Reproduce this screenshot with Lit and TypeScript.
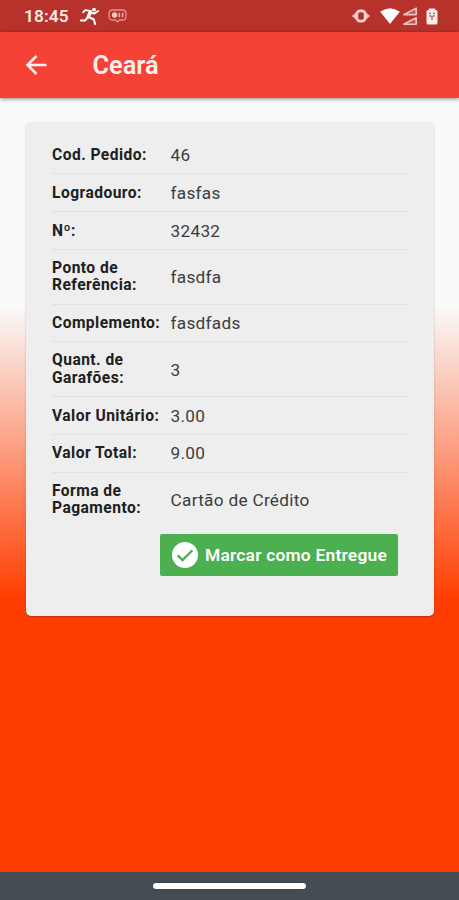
import { LitElement, html, css, svg } from "lit";
import { customElement } from "lit/decorators.js";

interface Field {
  label: string[];
  value: string;
}

const FIELDS: Field[] = [
  { label: ["Cod. Pedido:"], value: "46" },
  { label: ["Logradouro:"], value: "fasfas" },
  { label: ["Nº:"], value: "32432" },
  { label: ["Ponto de", "Referência:"], value: "fasdfa" },
  { label: ["Complemento:"], value: "fasdfads" },
  { label: ["Quant. de", "Garafões:"], value: "3" },
  { label: ["Valor Unitário:"], value: "3.00" },
  { label: ["Valor Total:"], value: "9.00" },
  { label: ["Forma de", "Pagamento:"], value: "Cartão de Crédito" },
];

const signal = (y: number) => svg`
  <path d="M1.8 ${y + 6.4} L14.2 ${y} V${y + 6.4} Z" fill="#c2544c" stroke="#f3c3bf" stroke-width="1.6" stroke-linejoin="round"/>`;

@customElement("status-bar")
class StatusBar extends LitElement {
  static styles = css`
    :host { display: flex; align-items: center; height: 32px; padding: 0 21px 0 24px; background: #b6322a; box-sizing: border-box; }
    .time { font: 600 17.3px/32px Roboto, sans-serif; letter-spacing: 0.1px; color: #fde9e7; width: 54.5px; white-space: nowrap; }
    svg { display: block; flex: none; }
    .chat { margin-left: 8px; }
    .gap { flex: 1; }
    .wifi { margin-left: 9px; }
    .cell { margin-left: 2px; }
    .battery { margin-left: 7px; }
  `;
  render() {
    return html`
      <span class="time">18:45</span>
      <svg width="21" height="20" viewBox="0 0 21 20" fill="none" stroke="#fff" stroke-linecap="round" stroke-linejoin="round">
        <circle cx="15" cy="3.6" r="1.9" fill="#fff" stroke="none"/>
        <path d="M11.4 6 L9.4 10.6" stroke-width="3.6"/>
        <path d="M11.5 4.8 L6.2 4.2 L4 6.4" stroke-width="1.8"/>
        <path d="M12.5 6.6 L15 7.6 L19.2 5" stroke-width="1.9"/>
        <path d="M8.8 11 L6.2 14.6 L1.8 14.4" stroke-width="2"/>
        <path d="M10 11.2 L14.6 13.2 L16.2 18" stroke-width="2.1"/>
      </svg>
      <svg class="chat" width="19" height="16" viewBox="0 0 19 16">
        <path d="M4.5 2 H14.5 Q18 2 18 5.5 V8.5 Q18 12 14.5 12 H11.5 L9.5 14 L7.5 12 H4.5 Q1 12 1 8.5 V5.5 Q1 2 4.5 2Z" fill="none" stroke="#df958f" stroke-width="1.3"/>
        <circle cx="6.6" cy="7" r="2.7" fill="#f5c9c5"/>
        <path d="M11.3 4.8 V9.2 M14.6 4.8 V9.2" stroke="#e8aaa5" stroke-width="1.7"/>
      </svg>
      <span class="gap"></span>
      <svg width="20" height="16" viewBox="0 0 20 16">
        <path d="M5 4.4 L0.8 8 L5 11.6Z M15 4.4 L19.2 8 L15 11.6Z" fill="#f0bfba"/>
        <rect x="5.8" y="2.8" width="8.4" height="10.4" rx="3.4" fill="none" stroke="#f7d3d0" stroke-width="2.7"/>
      </svg>
      <svg class="wifi" width="20" height="16" viewBox="0 0 20 16">
        <path d="M0.2 3.8 Q10 -3.2 19.8 3.8 L10 16Z" fill="#fff"/>
      </svg>
      <svg class="cell" width="17" height="19" viewBox="0 0 17 19">${signal(1.2)}${signal(10.8)}</svg>
      <svg class="battery" width="12" height="17" viewBox="0 0 12 17">
        <path d="M2.8 2 V0.4 H9.2 V2 H10 Q11.5 2 11.5 3.5 V15 Q11.5 16.5 10 16.5 H2 Q0.5 16.5 0.5 15 V3.5 Q0.5 2 2 2Z" fill="#fdeeed"/>
        <path d="M3.2 5.2 L5 5.8 M8.8 5.2 L7 5.8 M3.4 7.4 L6 9 L8.6 7.4 M6 8.6 V12" fill="none" stroke="#b4706c" stroke-width="1.6"/>
      </svg>
    `;
  }
}

@customElement("order-card")
class OrderCard extends LitElement {
  static styles = css`
    :host { display: block; box-sizing: border-box; width: 408px; height: 494px; padding: 14.7px 24px 0 26px; border-radius: 5px; background: #eee; box-shadow: 0 1px 2px rgba(0, 0, 0, 0.25); }
    .row { display: flex; align-items: center; box-sizing: border-box; height: 37.75px; border-bottom: 1.3px solid #e2e2e2; }
    .row.tall { height: 54.7px; }
    .row:last-of-type { border-bottom: 0; }
    .label { width: 118.5px; flex: none; padding-top: 1.8px; font: 700 15.6px/17.5px Roboto, sans-serif; letter-spacing: 0.45px; color: #202020; white-space: nowrap; }
    .tall .label { padding-top: 1px; }
    .label span { display: block; }
    .value { padding-top: 0.6px; font: 400 17.2px/22px Roboto, sans-serif; letter-spacing: 0.3px; color: #3c3c3c; white-space: nowrap; }
    .done { display: flex; align-items: center; box-sizing: border-box; width: 238px; height: 42px; margin: 6.3px 0 0 108px; padding: 0 0 0 12px; border: 0; border-radius: 2px; background: #4caf50; color: #fff; font: 600 17.4px/22px Roboto, sans-serif; letter-spacing: 0.22px; white-space: nowrap; }
    .done svg { display: block; flex: none; margin-right: 7px; }
  `;
  render() {
    return html`
      ${FIELDS.map((f) => html`
        <div class="row ${f.label.length > 1 ? "tall" : ""}">
          <div class="label">${f.label.map((l) => html`<span>${l}</span>`)}</div>
          <div class="value">${f.value}</div>
        </div>`)}
      <button class="done">
        <svg width="26" height="26" viewBox="0 0 26 26">
          <circle cx="13" cy="13" r="13" fill="#fff"/>
          <path d="M5.7 13.4 L10.5 18.1 L20.4 8.2" fill="none" stroke="#4caf50" stroke-width="2.3"/>
        </svg>
        <span>Marcar como Entregue</span>
      </button>
    `;
  }
}

@customElement("app-root")
class AppRoot extends LitElement {
  static styles = css`
    :host { display: flex; flex-direction: column; width: 459px; height: 900px; overflow: hidden; font-family: Roboto, sans-serif; }
    .bar { display: flex; align-items: center; flex: none; height: 66px; padding-left: 24px; background: #f44336; box-shadow: 0 1px 4px rgba(0, 0, 0, 0.45); z-index: 1; }
    .bar svg { display: block; margin-right: 43.5px; }
    h1 { margin: 0; padding-top: 2px; font: 600 25.3px/32px Roboto, sans-serif; letter-spacing: 0; color: #fff0ee; }
    main { flex: 1; padding: 24px 0 0 26px; background: linear-gradient(to bottom, #fafafa 207px, #ff3d00 502px); }
    .nav { display: flex; justify-content: center; align-items: center; flex: none; height: 28px; background: #454d52; }
    .pill { width: 153px; height: 5.5px; border-radius: 3px; background: #fff; box-shadow: 0 0 2px #2b363c; }
  `;
  render() {
    return html`
      <status-bar></status-bar>
      <header class="bar">
        <svg width="25" height="24" viewBox="0 0 25 24">
          <path d="M22.5 12 H4 M12.5 3 L3.5 12 L12.5 21" fill="none" stroke="#fff0ee" stroke-width="2.5"/>
        </svg>
        <h1>Ceará</h1>
      </header>
      <main><order-card></order-card></main>
      <footer class="nav"><div class="pill"></div></footer>
    `;
  }
}
